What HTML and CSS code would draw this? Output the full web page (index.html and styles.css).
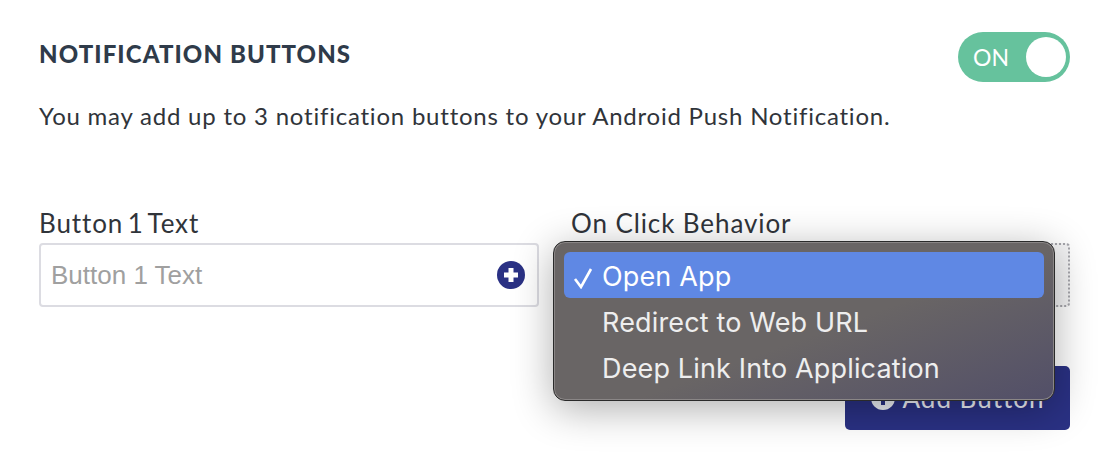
FILE: index.html
```html
<!DOCTYPE html>
<html lang="en">
<head>
  <meta charset="UTF-8">
  <title>Notification Buttons</title>
  <link rel="stylesheet" href="styles.css">
</head>
<body>
  <div class="panel">
    <div class="panel-head">
      <h2>NOTIFICATION BUTTONS</h2>
      <div class="toggle">
        <span>ON</span>
        <i class="knob"></i>
      </div>
    </div>
    <p class="help">You may add up to 3 notification buttons to your Android Push Notification.</p>

    <div class="fields">
      <div class="field field-text">
        <label>Button 1 Text</label>
        <div class="input-box">
          <span class="placeholder">Button 1 Text</span>
          <svg class="plus" viewBox="0 0 28 28" width="28" height="28">
            <circle cx="14" cy="14" r="14" fill="#2a3184"/>
            <path d="M14 7v14M7 14h14" stroke="#fff" stroke-width="5"/>
          </svg>
        </div>
      </div>
      <div class="field field-select">
        <label>On Click Behavior</label>
        <div class="select-box">
          <div class="select-focus"></div>
          <!-- native macOS menu, open over the select -->
          <div class="menu">
            <div class="menu-item selected">
              <svg class="check" viewBox="0 0 20 22" width="20" height="22">
                <path d="M2 12l6 8L18 2" fill="none" stroke="#fff" stroke-width="2.6"/>
              </svg>
              Open App
            </div>
            <div class="menu-item">Redirect to Web URL</div>
            <div class="menu-item">Deep Link Into Application</div>
          </div>
        </div>
      </div>
    </div>

    <div class="actions">
      <button class="add-button">
        <svg viewBox="0 0 24 24" width="24" height="24">
          <circle cx="12" cy="12" r="12" fill="#eef0f6"/>
          <path d="M12 5v14M5 12h14" stroke="#2a3184" stroke-width="4"/>
        </svg>
        Add Button
      </button>
    </div>
  </div>
</body>
</html>
```

FILE: styles.css
```css
body {
  margin: 0;
  background-color: #fff;
  font-family: 'Lato', sans-serif;
  color: #30343a;
}

.panel {
  width: 1070px;
  height: 470px;
  box-sizing: border-box;
  padding: 32px 0 0 39px;
}

.panel-head {
  display: flex;
  justify-content: space-between;
  align-items: center;
  height: 50px;
}

.panel-head h2 {
  margin: 0 0 8px;
  font-size: 24px;
  font-weight: 900;
  letter-spacing: 1.1px;
  color: #2f3b4a;
}

.toggle {
  width: 112px;
  height: 50px;
  box-sizing: border-box;
  padding: 0 4px 0 15px;
  border-radius: 25px;
  background-color: #66c29d;
  color: #fff;
  font-size: 23px;
  display: flex;
  justify-content: space-between;
  align-items: center;
}

.knob {
  width: 40px;
  height: 40px;
  border-radius: 50%;
  background-color: #fff;
}

.help {
  margin: 20px 0 0;
  font-size: 24px;
  line-height: 28px;
  letter-spacing: 0.78px;
}

.fields {
  display: flex;
  margin-top: 78px;
}

.field label {
  display: block;
  font-size: 26px;
  line-height: 30px;
  letter-spacing: 0.9px;
  margin-bottom: 5px;
}

.field-text {
  width: 500px;
}

.field-text label {
  word-spacing: -3px;
}

.field-select {
  width: 499px;
  margin-left: 32px;
}

.input-box {
  height: 64px;
  box-sizing: border-box;
  padding: 0 12px 0 10px;
  border: 2px solid #dcdce2;
  border-radius: 4px;
  display: flex;
  justify-content: space-between;
  align-items: center;
}

.placeholder {
  font-family: 'Liberation Sans', sans-serif;
  font-size: 26px;
  color: #a0a0a0;
}

.select-box {
  position: relative;
  height: 64px;
}

.select-focus {
  height: 100%;
  box-sizing: border-box;
  border: 2px dotted #a6a6ac;
  border-radius: 4px;
  background-color: #f4f4f5;
}

.menu {
  position: absolute;
  top: -2px;
  left: -18px;
  width: 502px;
  height: 160px;
  box-sizing: border-box;
  padding: 10px;
  border: 1px solid #2a2a2a;
  border-radius: 12px;
  background: linear-gradient(160deg, #696565 55%, #524f68 100%);
  box-shadow: inset 0 0 0 1px #8a8686, 0 8px 40px rgba(0, 0, 0, 0.32);
  font-family: 'Inter', sans-serif;
  font-size: 27px;
  letter-spacing: 0.15px;
  color: #eeeeee;
}

.menu-item {
  height: 46px;
  line-height: 50px;
  padding-left: 38px;
  border-radius: 6px;
  position: relative;
}

.menu-item.selected {
  background-color: #5f88e4;
  color: #fff;
}

.check {
  position: absolute;
  left: 9px;
  top: 15px;
}

.actions {
  display: flex;
  justify-content: flex-end;
  margin-top: 59px;
}

.add-button {
  width: 225px;
  height: 64px;
  border: none;
  border-radius: 5px;
  background-color: #2a3184;
  color: #eef0f6;
  font-family: 'Lato', sans-serif;
  font-size: 26px;
  letter-spacing: 1px;
  display: flex;
  justify-content: center;
  align-items: center;
  gap: 8px;
}
```
